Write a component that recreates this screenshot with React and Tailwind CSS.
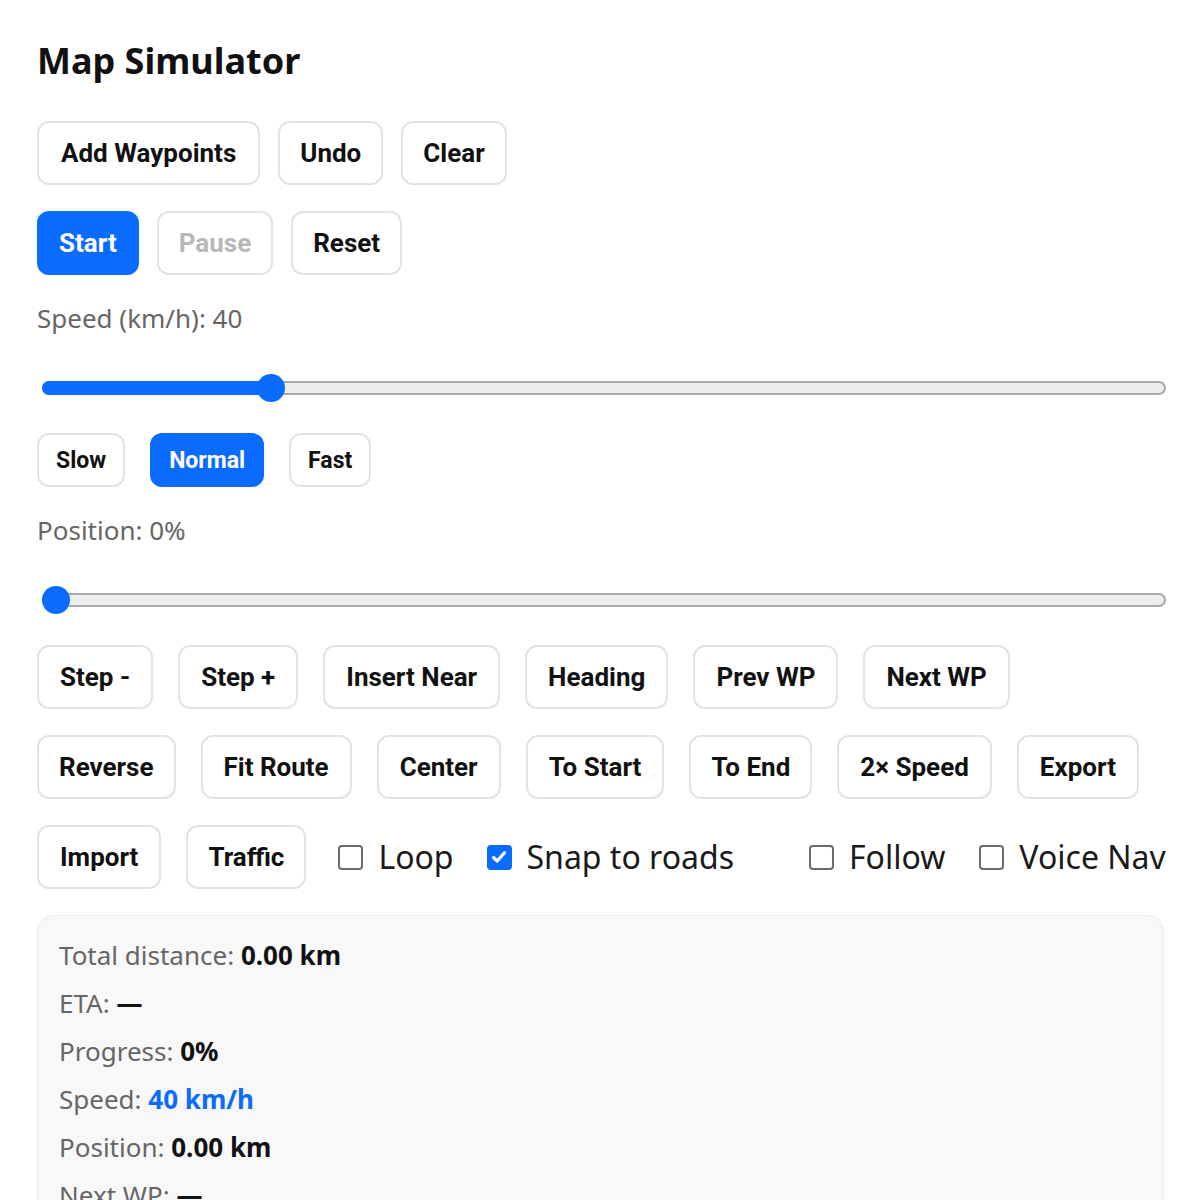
import React from "react";

const btnBase =
  "shrink-0 whitespace-nowrap rounded-[12px] border-2 border-[#e3e3e3] bg-white font-bold text-[#111] [font-family:Roboto,'Noto_Sans',sans-serif] leading-none flex items-center justify-center";

function Btn({ children, variant = "default", size = "lg", pad = "px-[20px]" }) {
  const sizeCls = size === "lg" ? "h-[64px] text-[26px]" : "h-[54px] text-[23px] px-[17px]";
  let v = "";
  if (variant === "primary") v = "!bg-[#0a6cff] !border-[#0a6cff] !text-white";
  if (variant === "disabled") v = "!text-[#b8b8b8]";
  return (
    <button className={`${btnBase} ${sizeCls} ${size === "lg" ? pad : ""} ${v}`}>{children}</button>
  );
}

function Slider({ pct }) {
  return (
    <div className="relative h-[28px] ml-[5px] mr-[-2px]">
      <div className="absolute left-0 right-0 top-[7px] h-[14px] rounded-full border-2 border-[#a9a9a9] bg-[#ededed]" />
      {pct > 0 && (
        <div
          className="absolute left-0 top-[7px] h-[14px] rounded-full bg-[#0a6cff]"
          style={{ width: `calc(${pct}% + 14px)` }}
        />
      )}
      <div
        className="absolute top-0 h-[28px] w-[28px] rounded-full bg-[#0a6cff]"
        style={{ left: `calc(${pct}% - ${pct * 0.28}px)` }}
      />
    </div>
  );
}

function Check({ checked, label, extra = "" }) {
  return (
    <label className={`flex shrink-0 items-center gap-[15px] whitespace-nowrap ${extra}`}>
      {checked ? (
        <span className="flex h-[25px] w-[25px] shrink-0 items-center justify-center rounded-[4px] bg-[#0a6cff]">
          <svg width="18" height="18" viewBox="0 0 18 18" fill="none">
            <path d="M3.5 9.5 L7.2 13 L14.5 4.8" stroke="white" strokeWidth="3.2" strokeLinecap="round" strokeLinejoin="round" />
          </svg>
        </span>
      ) : (
        <span className="h-[25px] w-[25px] shrink-0 rounded-[4px] border-2 border-[#6b6b6b] bg-white" />
      )}
      <span className="text-[32px] text-[#1a1a1a] leading-none">{label}</span>
    </label>
  );
}

function Stat({ label, value, blue }) {
  return (
    <div className="h-[48px] flex items-center text-[26px] leading-none">
      <span className="text-[#666]">{label}&nbsp;</span>
      <span className={`font-bold ${blue ? "text-[#0a6cff]" : "text-[#111]"}`}>{value}</span>
    </div>
  );
}

export default function App() {
  return (
    <div className="min-h-[1200px] overflow-hidden bg-white pl-[37px] pr-[36px] pt-[39px] [font-family:'Noto_Sans',sans-serif]">
      <h1 className="text-[36px] font-bold leading-[44px] text-[#111]">Map Simulator</h1>

      <div className="mt-[38px] flex gap-[18px]">
        <Btn pad="px-[22px]">Add Waypoints</Btn>
        <Btn>Undo</Btn>
        <Btn>Clear</Btn>
      </div>
      <div className="mt-[26px] flex gap-[18px]">
        <Btn variant="primary">Start</Btn>
        <Btn variant="disabled">Pause</Btn>
        <Btn>Reset</Btn>
      </div>

      <div className="mt-[25px] h-[36px] flex items-center text-[26px] text-[#666] leading-none">Speed (km/h): 40</div>
      <div className="mt-[38px]">
        <Slider pct={19.6} />
      </div>

      <div className="mt-[31px] flex gap-[25px]">
        <Btn size="sm">Slow</Btn>
        <Btn size="sm" variant="primary">Normal</Btn>
        <Btn size="sm">Fast</Btn>
      </div>

      <div className="mt-[25px] h-[36px] flex items-center text-[26px] text-[#666] leading-none">Position: 0%</div>
      <div className="mt-[38px]">
        <Slider pct={0} />
      </div>

      <div className="mt-[31px] flex gap-[25px]">
        <Btn pad="px-[21px]">Step -</Btn>
        <Btn pad="px-[21px]">Step +</Btn>
        <Btn pad="px-[21px]">Insert Near</Btn>
        <Btn pad="px-[21px]">Heading</Btn>
        <Btn pad="px-[21px]">Prev WP</Btn>
        <Btn pad="px-[21px]">Next WP</Btn>
      </div>
      <div className="mt-[26px] flex gap-[25px]">
        <Btn pad="px-[20px]">Reverse</Btn>
        <Btn pad="px-[21px]">Fit Route</Btn>
        <Btn pad="px-[21px]">Center</Btn>
        <Btn pad="px-[21px]">To Start</Btn>
        <Btn pad="px-[20px]">To End</Btn>
        <Btn pad="px-[21px]">2× Speed</Btn>
        <Btn pad="px-[21px]">Export</Btn>
      </div>
      <div className="mt-[26px] flex items-center gap-[25px]">
        <Btn pad="px-[21px]">Import</Btn>
        <Btn pad="px-[20px]">Traffic</Btn>
        <Check label="Loop" extra="ml-[7px]" />
        <Check checked label="Snap to roads" extra="ml-[8px]" />
        <Check label="Follow" extra="ml-[50px]" />
        <Check label="Voice Nav" extra="ml-[9px]" />
      </div>

      <div className="mt-[26px] rounded-[16px] border border-[#ececec] bg-[#f8f8f8] px-[21px] pt-[15px] pb-[16px]">
        <Stat label="Total distance:" value="0.00 km" />
        <Stat label="ETA:" value="—" />
        <Stat label="Progress:" value="0%" />
        <Stat label="Speed:" value="40 km/h" blue />
        <Stat label="Position:" value="0.00 km" />
        <Stat label="Next WP:" value="—" />
      </div>
    </div>
  );
}
